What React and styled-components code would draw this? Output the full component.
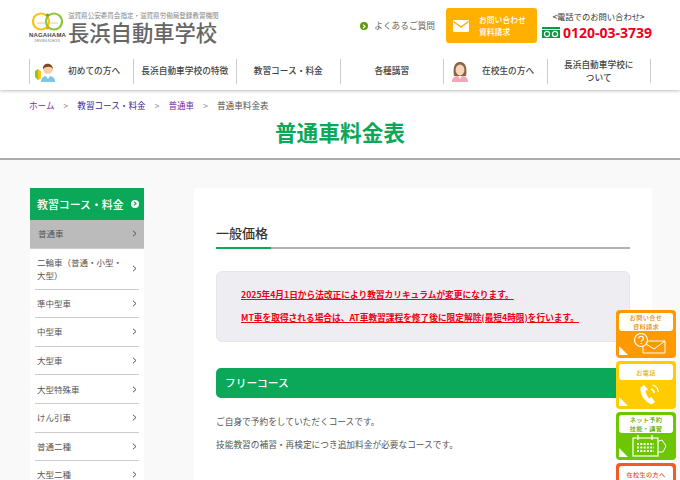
import styled, { createGlobalStyle } from "styled-components";

const GlobalStyle = createGlobalStyle`
  html, body {
    margin: 0;
    padding: 0;
    height: 480px;
    overflow: hidden;
    background: #f9f9f9;
    font-family: "Noto Sans CJK JP", "Noto Sans", sans-serif;
  }
  * { box-sizing: border-box; }
`;

const navItems = [
  { label: "初めての方へ", icon: "boy" },
  { label: "長浜自動車学校の特徴" },
  { label: "教習コース・料金" },
  { label: "各種講習" },
  { label: "在校生の方へ", icon: "girl" },
  { label: "長浜自動車学校について", narrow: true },
];

const sideItems = [
  "普通車",
  "二輪車（普通・小型・大型）",
  "準中型車",
  "中型車",
  "大型車",
  "大型特殊車",
  "けん引車",
  "普通二種",
  "大型二種",
];

const LogoMark = () => (
  <svg width="31" height="19" viewBox="0 0 31 19">
    <circle cx="9" cy="9.500" r="8" fill="none" stroke="#f7c31a" strokeWidth="2.2" />
    <circle cx="22" cy="9.500" r="8" fill="none" stroke="#8cc63f" strokeWidth="2.2" />
    <path d="M5 11h8M18 11h8" stroke="#d9d27a" strokeWidth="1" />
    <circle cx="15.500" cy="3" r="1.600" fill="#6aa82e" />
    <circle cx="15.500" cy="16" r="1.500" fill="#f0a020" />
  </svg>
);

const BoyIcon = () => (
  <svg width="22" height="21" viewBox="0 0 22 21">
    <path d="M1 10l3-2 3 3v6l-3 2-3-3z" fill="#8fc31f" />
    <path d="M4 8l3 3v6l-3 2z" fill="#f5c518" />
    <path d="M7 21c0-5 3-6 7-6s7 1 7 6z" fill="#7ec4e4" />
    <path d="M12 15l2 3 2-3z" fill="#fff" />
    <circle cx="14" cy="8" r="5" fill="#f6cfa8" />
    <path d="M9 8c-1-6 9-8 10 0-2-3-7-3-10 0z" fill="#7a4e22" />
  </svg>
);

const GirlIcon = () => (
  <svg width="21" height="21" viewBox="-3 0 21 21">
    <path d="M1 21c0-5 3-6 8-6s8 1 8 6z" fill="#f4a6b4" />
    <path d="M3 15C1 3 6 1 9 1s8 2 6 14z" fill="#8a6547" />
    <ellipse cx="9" cy="9" rx="4.400" ry="5.400" fill="#f8d4b8" />
    <path d="M7 15h4l-2 3z" fill="#fff" />
  </svg>
);

const MailIcon = () => (
  <svg width="16" height="12" viewBox="0 0 16 12">
    <rect width="16" height="12" rx="1.200" fill="#fff" />
    <path d="M0.500 1.500L8 7l7.500-5.500" fill="none" stroke="#ffb000" strokeWidth="1.500" />
  </svg>
);

const FreeDial = () => (
  <svg width="19" height="12" viewBox="0 0 19 12">
    <rect width="18" height="11" fill="#0a9a45" />
    <rect y="2" width="18" height="1" fill="#fff" />
    <circle cx="5" cy="7" r="2.600" fill="none" stroke="#fff" strokeWidth="1.200" />
    <circle cx="13" cy="7" r="2.600" fill="none" stroke="#fff" strokeWidth="1.200" />
  </svg>
);

const Chevron = () => (
  <svg width="5" height="7" viewBox="0 0 5 7">
    <path d="M1 .8L4 3.500 1 6.200" fill="none" stroke="#555" strokeWidth="1" />
  </svg>
);

const QuestionMail = () => (
  <svg width="34" height="22" viewBox="0 0 34 22">
    <path d="M11 8h22v12H11z" fill="#ff9900" stroke="#fff" strokeWidth="1" />
    <path d="M11 9l11 7 11-8" fill="none" stroke="#fff" strokeWidth="1" />
    <circle cx="9" cy="7" r="6.500" fill="#ff9900" stroke="#fff" strokeWidth="1.200" />
    <path d="M6.800 5.500c0-3 4.600-3 4.600 0 0 1.800-2.300 1.700-2.300 3.300M9.100 10v1" fill="none" stroke="#fff" strokeWidth="1.200" />
  </svg>
);

const PhoneCall = () => (
  <svg width="24" height="24" viewBox="0 0 24 24">
    <path d="M7 3L3.500 5.500C2.500 12 8 20 14.500 22.500L18 20l-3.500-5-2.500 1.500C10 14 8.500 11 8.500 9L11 7.500z" fill="#fff" />
    <path d="M14 7c2 .5 3 2 3.500 4M15.500 3c3.500 1 5.500 3.500 6 7" fill="none" stroke="#fff" strokeWidth="1.300" />
  </svg>
);

const CalendarIcon = () => (
  <svg width="36" height="22" viewBox="0 0 36 22">
    <path d="M25 7l6-2 4 6-3 6h-7z" fill="#6cc700" stroke="#fff" strokeWidth="1" />
    <rect x="2" y="3" width="25" height="18" fill="#6cc700" stroke="#fff" strokeWidth="1.200" />
    <path d="M7 0v5M21 0v5" stroke="#fff" strokeWidth="1.300" />
    <path d="M6 9h17M6 12.500h17M6 16h17" stroke="#fff" strokeWidth="2" strokeDasharray="2 1.300" />
  </svg>
);

const floats = [
  { label: ["お問い合せ", "資料請求"], color: "#ff9900", icon: <QuestionMail />, text: "#e88a00" },
  { label: ["お電話"], color: "#ffcc00", icon: <PhoneCall />, text: "#eab500" },
  { label: ["ネット予約", "技能・講習"], color: "#6cc700", icon: <CalendarIcon />, text: "#58a800" },
  { label: ["在校生の方へ"], color: "#f25c22", text: "#e8501a" },
];

export default function App() {
  return (
    <>
      <GlobalStyle />
      <Header>
        <TopRow>
          <Logo>
            <LogoBadge>
              <LogoMark />
              <LogoWord>NAGAHAMA</LogoWord>
              <LogoSub>DRIVING SCHOOL</LogoSub>
            </LogoBadge>
            <LogoText>
              <LogoCaption>滋賀県公安委員会指定・滋賀県労働局登録教習機関</LogoCaption>
              <LogoName>長浜自動車学校</LogoName>
            </LogoText>
          </Logo>
          <TopRight>
            <Faq>
              <FaqDot><Chevron /></FaqDot>
              よくあるご質問
            </Faq>
            <ContactButton>
              <MailIcon />
              <span>お問い合わせ<br />資料請求</span>
            </ContactButton>
            <TelBlock>
              <TelLabel>&lt;電話でのお問い合わせ&gt;</TelLabel>
              <TelRow>
                <FreeDial />
                <TelNumber>0120-03-3739</TelNumber>
              </TelRow>
            </TelBlock>
          </TopRight>
        </TopRow>
        <Nav>
          {navItems.map((item) => (
            <NavItem key={item.label} $narrow={item.narrow} $withIcon={!!item.icon}>
              {item.icon === "boy" && <NavIcon><BoyIcon /></NavIcon>}
              {item.icon === "girl" && <NavIcon><GirlIcon /></NavIcon>}
              <span>{item.label}</span>
            </NavItem>
          ))}
        </Nav>
      </Header>

      <TitleArea>
        <Breadcrumb>
          <Crumb href="#">ホーム</Crumb>
          <Sep>&gt;</Sep>
          <Crumb href="#" $blue>教習コース・料金</Crumb>
          <Sep>&gt;</Sep>
          <Crumb href="#">普通車</Crumb>
          <Sep>&gt;</Sep>
          <span>普通車料金表</span>
        </Breadcrumb>
        <PageTitle>普通車料金表</PageTitle>
      </TitleArea>

      <Content>
        <Sidebar>
          <SideHead>
            教習コース・料金
            <SideDot><Chevron /></SideDot>
          </SideHead>
          {sideItems.map((label, i) => (
            <SideItem key={label} $active={i === 0}>
              <SideLabel>{label}</SideLabel>
              <Chevron />
            </SideItem>
          ))}
        </Sidebar>
        <Main>
          <SectionTitle>一般価格</SectionTitle>
          <Notice>
            <NoticeLine>2025年4月1日から法改正により教習カリキュラムが変更になります。</NoticeLine>
            <NoticeLine>MT車を取得される場合は、AT車教習課程を修了後に限定解除(最短4時限)を行います。</NoticeLine>
          </Notice>
          <CourseBar>フリーコース</CourseBar>
          <Para>ご自身で予約をしていただくコースです。</Para>
          <Para>技能教習の補習・再検定につき追加料金が必要なコースです。</Para>
        </Main>
      </Content>

      <FloatColumn>
        {floats.map((f) => (
          <FloatCard key={f.label[0]} $color={f.color}>
            <FloatLabel $text={f.text} $single={f.label.length === 1}>
              {f.label.map((l) => <div key={l}>{l}</div>)}
            </FloatLabel>
            {f.icon && <FloatIcon>{f.icon}</FloatIcon>}
            {f.icon && <FloatCorner />}
          </FloatCard>
        ))}
      </FloatColumn>
    </>
  );
}

const Header = styled.header`
  height: 90px;
  background: #fff;
  padding: 0 28px 0 29px;
  box-shadow: 0 1px 3px rgba(0, 0, 0, 0.25);
  position: relative;
`;

const TopRow = styled.div`
  height: 59px;
  display: flex;
  justify-content: space-between;
  padding-top: 8px;
`;

const Logo = styled.div`
  display: flex;
  gap: 4px;
  padding: 2px 0 0 2px;
`;

const LogoBadge = styled.div`
  width: 33px;
  padding-top: 2px;
  display: flex;
  flex-direction: column;
  align-items: center;
`;

const LogoWord = styled.div`
  font-family: "Liberation Sans", sans-serif;
  font-weight: 700;
  font-size: 6px;
  line-height: 7px;
  margin-top: 1px;
  letter-spacing: 0.2px;
  color: #444;
`;

const LogoSub = styled.div`
  font-family: "Liberation Sans", sans-serif;
  font-size: 3px;
  line-height: 4px;
  color: #777;
  white-space: nowrap;
`;

const LogoText = styled.div`
  display: flex;
  flex-direction: column;
  color: #666;
`;

const LogoCaption = styled.div`
  font-size: 6.560px;
  line-height: 10px;
  white-space: nowrap;
  color: #888;
`;

const LogoName = styled.div`
  margin-top: 1px;
  font-size: 21.300px;
  line-height: 21px;
  font-weight: 500;
  white-space: nowrap;
`;

const TopRight = styled.div`
  display: flex;
  align-items: flex-start;
`;

const Faq = styled.a`
  display: flex;
  align-items: center;
  gap: 6px;
  margin-top: 12px;
  margin-right: 11px;
  font-size: 8.700px;
  line-height: 12px;
  color: #666;
`;

const FaqDot = styled.span`
  width: 8px;
  height: 8px;
  border-radius: 50%;
  background: #5f9a10;
  display: flex;
  align-items: center;
  justify-content: center;
  svg { width: 4px; height: 5px; }
  svg path { stroke: #fff; stroke-width: 1.6; }
`;

const ContactButton = styled.a`
  width: 91px;
  height: 35px;
  border-radius: 3px;
  background: #ffb000;
  color: #fff;
  display: flex;
  align-items: center;
  gap: 10px;
  padding-left: 7px;
  font-size: 7.800px;
  line-height: 11.500px;
  font-weight: 500;
`;

const TelBlock = styled.div`
  width: 110px;
  margin-left: 5px;
  display: flex;
  flex-direction: column;
  align-items: center;
`;

const TelLabel = styled.div`
  font-size: 8.300px;
  line-height: 16px;
  color: #333;
  white-space: nowrap;
  margin-left: 3px;
`;

const TelRow = styled.div`
  display: flex;
  align-items: center;
  gap: 2px;
`;

const TelNumber = styled.div`
  font-family: "Open Sans", sans-serif;
  font-weight: 700;
  font-size: 14px;
  line-height: 18px;
  color: #ee0022;
  white-space: nowrap;
`;

const Nav = styled.nav`
  display: grid;
  grid-template-columns: repeat(6, 1fr);
  height: 24px;
  width: 622px;
  border-right: 1px solid #ccc;
`;

const NavItem = styled.a`
  display: flex;
  align-items: center;
  justify-content: ${(p) => (p.$withIcon ? "flex-start" : "center")};
  border-left: 1px solid #ccc;
  font-size: 8.700px;
  line-height: 12.600px;
  font-weight: 500;
  color: #444;
  text-align: center;
  padding: ${(p) => (p.$narrow ? "0 14px" : p.$withIcon ? "0 0 0 4px" : "0")};
`;

const NavIcon = styled.span`
  width: 34px;
  display: flex;
`;

const TitleArea = styled.div`
  height: 70px;
  background: #fff;
  border-bottom: 2px solid #aaa;
`;

const Breadcrumb = styled.div`
  height: 29px;
  padding: 9px 29px 0;
  display: flex;
  align-items: flex-start;
  font-size: 8.600px;
  line-height: 12px;
  color: #555;
`;

const Crumb = styled.a`
  color: ${(p) => (p.$blue ? "#3a1f9b" : "#7b2aa8")};
  text-decoration: none;
`;

const Sep = styled.span`
  margin: 0 9px;
  color: #888;
`;

const PageTitle = styled.h1`
  margin: 0;
  text-align: center;
  font-size: 21.700px;
  line-height: 26px;
  font-weight: 700;
  color: #0aa858;
`;

const Content = styled.div`
  display: flex;
  align-items: flex-start;
  gap: 50px;
  padding: 28px 28px 0 30px;
`;

const Sidebar = styled.aside`
  width: 114px;
  flex: none;
  background: #fff;
`;

const SideHead = styled.div`
  height: 32px;
  background: #0aa858;
  color: #fff;
  display: flex;
  align-items: center;
  justify-content: space-between;
  padding: 0 5px 1px 7px;
  font-size: 10.900px;
  font-weight: 500;
  white-space: nowrap;
`;

const SideDot = styled.span`
  width: 8px;
  height: 8px;
  border-radius: 50%;
  background: #fff;
  display: flex;
  align-items: center;
  justify-content: center;
  svg { width: 4px; height: 5px; }
  svg path { stroke: #0aa858; stroke-width: 1.6; }
`;

const SideItem = styled.a`
  display: flex;
  align-items: center;
  justify-content: space-between;
  gap: 8px;
  min-height: 28.600px;
  padding: 7px ${(p) => (p.$active ? "7px" : "2px")} 7px ${(p) => (p.$active ? "8px" : "2px")};
  margin: 0 ${(p) => (p.$active ? "0" : "5px")};
  background: ${(p) => (p.$active ? "#bbb" : "transparent")};
  border-bottom: 1px solid #ccc;
  font-size: 8.500px;
  line-height: 13px;
  color: #555;
  svg { flex: none; }
`;

const SideLabel = styled.span`
  flex: 1;
`;

const Main = styled.main`
  flex: 1;
  background: #fff;
  padding: 35px 22px 0;
  height: 300px;
`;

const SectionTitle = styled.h2`
  position: relative;
  margin: 0 0 22px;
  height: 26px;
  padding-top: 1px;
  font-size: 13px;
  line-height: 18px;
  font-weight: 500;
  color: #333;
  border-bottom: 2px solid #b2b2b2;

  &::after {
    content: "";
    position: absolute;
    left: 0;
    bottom: -2px;
    width: 55px;
    height: 2px;
    background: #0aa858;
  }
`;

const Notice = styled.div`
  height: 71px;
  background: #eeedf2;
  border: 1px solid #e6e6ea;
  border-radius: 6px;
  padding: 17px 24px;
  display: flex;
  flex-direction: column;
  gap: 11px;
`;

const NoticeLine = styled.p`
  margin: 0;
  font-size: 8.700px;
  line-height: 12px;
  font-weight: 700;
  color: #f00014;
  text-decoration: underline;
  white-space: nowrap;
`;

const CourseBar = styled.h3`
  margin: 26px 0 18px;
  height: 30px;
  border-radius: 5px;
  background: #0aa858;
  color: #fff;
  padding-left: 9px;
  font-size: 10.700px;
  line-height: 30px;
  font-weight: 500;
`;

const Para = styled.p`
  margin: 0 0 11px;
  font-size: 8.700px;
  line-height: 12px;
  color: #555;
`;

const FloatColumn = styled.div`
  position: fixed;
  top: 310px;
  right: 4px;
  width: 60px;
  display: flex;
  flex-direction: column;
  gap: 3px;
`;

const FloatCard = styled.a`
  position: relative;
  height: 48px;
  border-radius: 4px;
  background: ${(p) => p.$color};
  padding: 3px;
  display: flex;
  flex-direction: column;
  align-items: center;
`;

const FloatLabel = styled.div`
  width: 100%;
  height: ${(p) => (p.$single ? "16px" : "18px")};
  background: #fff;
  border-radius: 3px;
  color: ${(p) => p.$text};
  font-size: 6.200px;
  letter-spacing: 0.3px;
  line-height: 9px;
  font-weight: 500;
  text-align: center;
  white-space: nowrap;
  display: flex;
  flex-direction: column;
  justify-content: center;
`;

const FloatIcon = styled.div`
  margin-top: 2px;
  margin-left: 6px;
  display: flex;
`;

const FloatCorner = styled.span`
  position: absolute;
  left: 3px;
  bottom: 3px;
  width: 0;
  height: 0;
  border-style: solid;
  border-width: 9px 0 0 9px;
  border-color: transparent transparent transparent #fff;
`;
